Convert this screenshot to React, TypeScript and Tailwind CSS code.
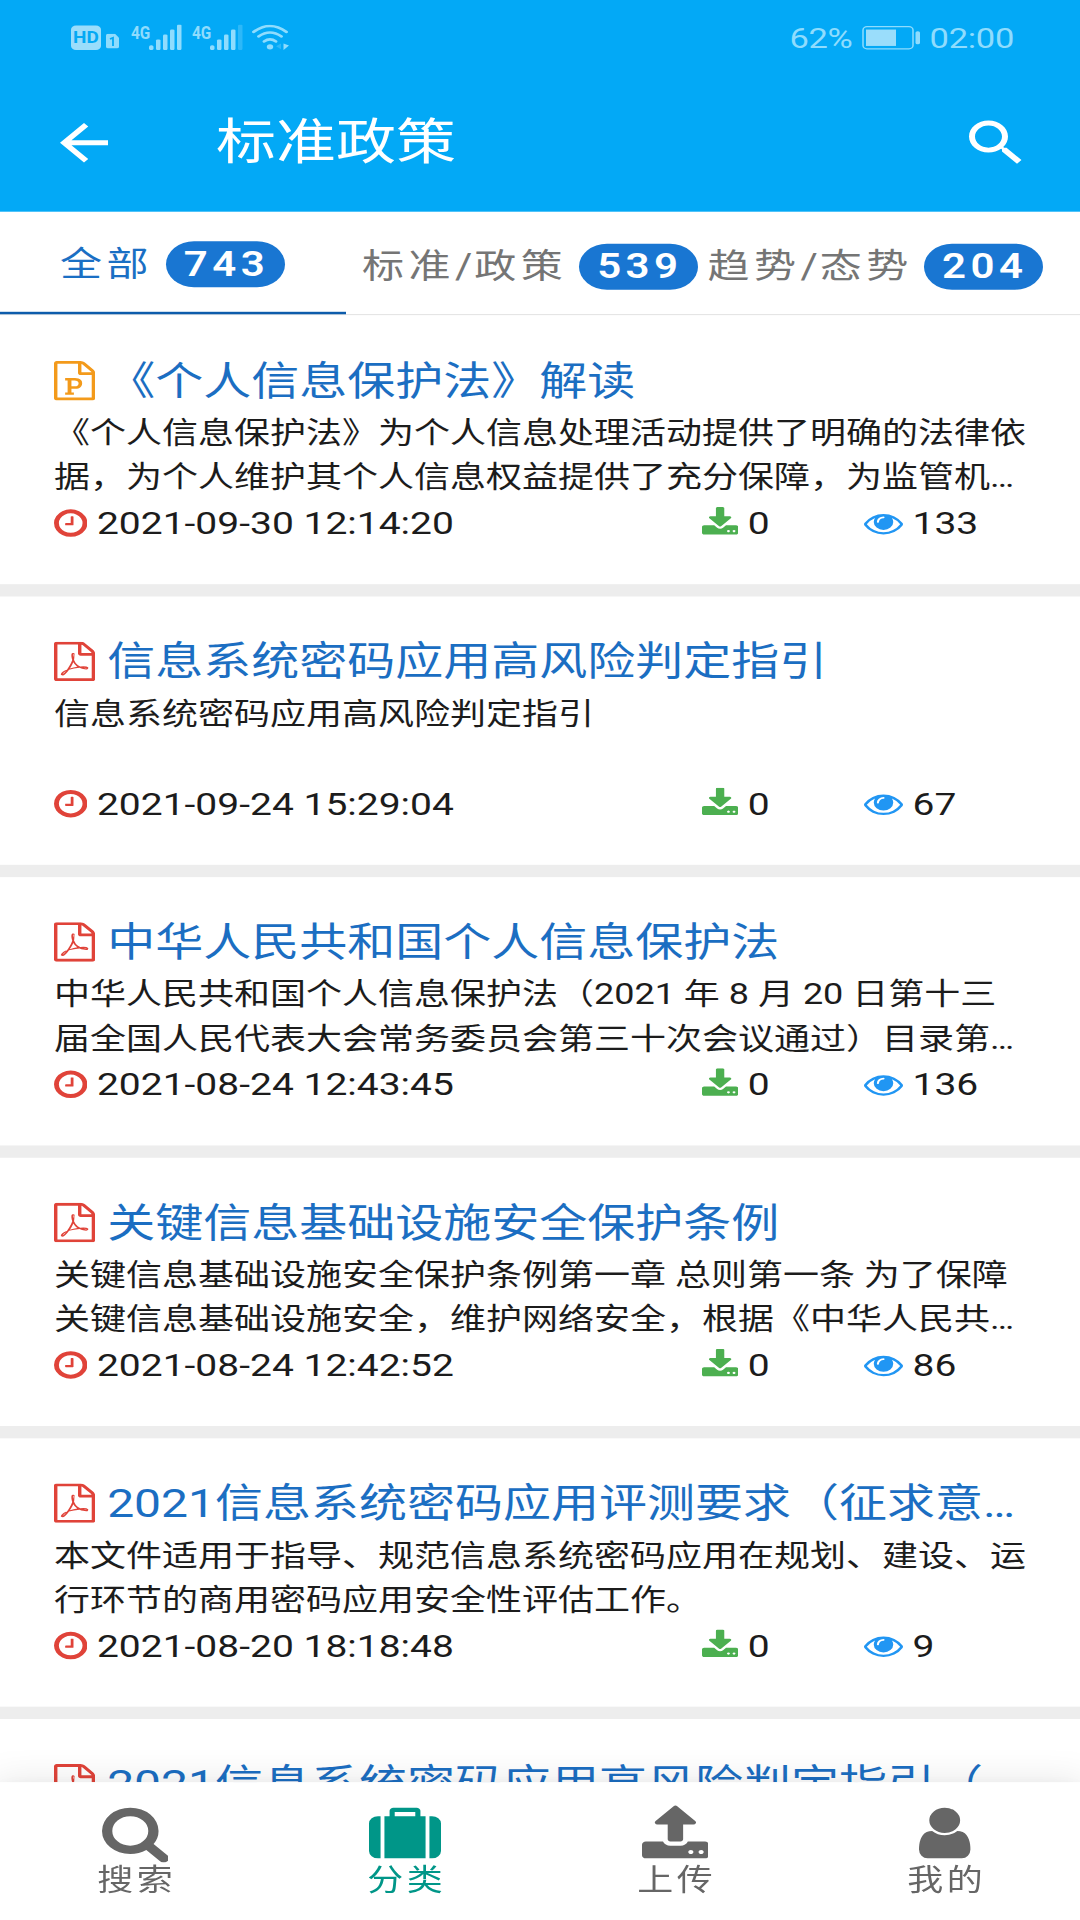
import type { ReactNode } from 'react'

type IconName =
  | 'pdf'
  | 'ppt'
  | 'clock'
  | 'download'
  | 'eye'
  | 'search'
  | 'suitcase'
  | 'upload'
  | 'user'

type Article = {
  icon: 'pdf' | 'ppt'
  title: string
  summary?: string
  date?: string
  downloads?: number
  views?: number
}

const FILE_OUTLINE =
  'M1596 380q28 28 48 76t20 88v1152q0 40-28 68t-68 28h-1344q-40 0-68-28t-28-68v-1600q0-40 28-68t68-28h896q40 0 88 20t76 48zm-444-244v376h376q-10-29-22-41l-313-313q-12-12-41-22zm384 1528v-1024h-416q-40 0-68-28t-28-68v-416h-768v1536h1280z'

// viewBox + path, on the 1792 unit grid
const icons: Record<IconName, { box: string; d: string }> = {
  pdf: {
    box: '128 0 1536 1792',
    d:
      FILE_OUTLINE +
      'm-514-593q33 26 84 56 59-7 117-7 147 0 177 49 16 22 2 52 0 1-1 2l-2 2v1q-6 38-71 38-48 0-115-20t-130-53q-221 24-392 83-153 262-242 262-15 0-28-7l-24-12q-1-1-6-5-10-10-6-36 9-40 56-91.5t132-96.5q14-9 23 6 2 2 2 4 52-85 107-197 68-136 104-262-24-82-30.5-159.5t6.5-127.5q11-40 42-40h22q23 0 35 15 18 21 9 68-2 6-4 8 1 3 1 8v30q-2 123-14 192 55 164 146 238zm-576 411q52-24 137-158-51 40-87.5 84t-49.5 74zm398-920q-15 42-2 132 1-7 7-44 0-3 7-43 1-4 4-8-1-1-1-2-1-2-1-3-1-22-13-36 0 1-1 2v2zm-124 661q135-54 284-81-2-1-13-9.5t-16-13.5q-76-67-127-176-27 86-83 197-30 56-45 83zm646-16q-24-24-140-24 76 28 124 28 14 0 18-1 0-1-2-3z',
  },
  ppt: {
    box: '128 0 1536 1792',
    d:
      FILE_OUTLINE +
      'M544 1429v107h327v-107h-92v-167h137q76 0 118-15 67-23 106.500-91t39.500-146q0-77-37-134t-100-83q-48-19-130-19h-369v107h92v548zM903 1149h-124v-263h125q54 0 86 19 57 35 57 111 0 84-56 117-34 16-88 16z',
  },
  clock: {
    box: '128 0 1536 1792',
    d: 'M1024 544v448q0 14-9 23t-23 9h-320q-14 0-23-9t-9-23v-64q0-14 9-23t23-9h224v-352q0-14 9-23t23-9h64q14 0 23 9t9 23zm416 352q0-148-73-273t-198-198-273-73-273 73-198 198-73 273 73 273 198 198 273 73 273-73 198-198 73-273zm224 0q0 209-103 385.5t-279.5 279.5-385.5 103-385.5-103-279.5-279.5-103-385.5 103-385.5 279.5-279.5 385.5-103 385.5 103 279.5 279.5 103 385.5z',
  },
  download: {
    box: '64 0 1664 1792',
    d: 'M1344 1344q0-26-19-45t-45-19-45 19-19 45 19 45 45 19 45-19 19-45zm256 0q0-26-19-45t-45-19-45 19-19 45 19 45 45 19 45-19 19-45zm128-224v320q0 40-28 68t-68 28h-1472q-40 0-68-28t-28-68v-320q0-40 28-68t68-28h465l135 136q58 56 136 56t136-56l136-136h464q40 0 68 28t28 68zm-325-569q17 41-14 70l-448 448q-18 19-45 19t-45-19l-448-448q-31-29-14-70 17-39 59-39h256v-448q0-26 19-45t45-19h256q26 0 45 19t19 45v448h256q42 0 59 39z',
  },
  eye: {
    box: '0 0 1792 1792',
    d: 'M1664 960q-152-236-381-353 61 104 61 225 0 185-131.5 316.500t-316.500 131.500-316.500-131.500-131.500-316.500q0-121 61-225-229 117-381 353 133 205 333.500 326.500t434.500 121.500 434.500-121.500 333.500-326.500zm-720-384q0-20-14-34t-34-14q-125 0-214.500 89.500t-89.500 214.500q0 20 14 34t34 14 34-14 14-34q0-86 61-147t147-61q20 0 34-14t14-34zm848 384q0 34-20 69-140 230-376.500 368.500t-499.500 138.500-499.500-139-376.500-368q-20-35-20-69t20-69q140-229 376.500-368t499.500-139 499.500 139 376.500 368q20 35 20 69z',
  },
  search: {
    box: '64 0 1664 1792',
    d: 'M1216 832q0-185-131.5-316.5t-316.5-131.5-316.5 131.5-131.5 316.5 131.5 316.5 316.5 131.5 316.5-131.5 131.5-316.5zm512 832q0 52-38 90t-90 38q-54 0-90-38l-343-342q-179 124-399 124-143 0-273.5-55.5t-225-150-150-225-55.5-273.5 55.5-273.5 150-225 225-150 273.5-55.5 273.5 55.5 225 150 150 225 55.5 273.5q0 220-124 399l343 343q37 37 37 90z',
  },
  suitcase: {
    box: '0 0 1792 1792',
    d: 'M640 384h512v-128h-512v128zm-352 0v1280h-64q-92 0-158-66t-66-158v-832q0-92 66-158t158-66h64zm1120 0v1280h-1024v-1280h128v-160q0-40 28-68t68-28h576q40 0 68 28t28 68v160h128zm384 224v832q0 92-66 158t-158 66h-64v-1280h64q92 0 158 66t66 158z',
  },
  upload: {
    box: '64 0 1664 1792',
    d: 'M1344 1472q0-26-19-45t-45-19-45 19-19 45 19 45 45 19 45-19 19-45zm256 0q0-26-19-45t-45-19-45 19-19 45 19 45 45 19 45-19 19-45zm128-224v320q0 40-28 68t-68 28h-1472q-40 0-68-28t-28-68v-320q0-40 28-68t68-28h427q21 56 70.5 92t110.5 36h256q61 0 110.5-36t70.5-92h427q40 0 68 28t28 68zm-325-648q-17 40-59 40h-256v448q0 26-19 45t-45 19h-256q-26 0-45-19t-19-45v-448h-256q-42 0-59-40-17-39 14-69l448-448q18-19 45-19t45 19l448 448q31 30 14 69z',
  },
  user: {
    box: '256 0 1280 1792',
    d: 'M1536 1399q0 109-62.5 187t-150.5 78h-854q-88 0-150.5-78t-62.5-187q0-85 8.5-160.5t31.5-152 58.5-131 94-89 134.5-34.5q131 128 313 128t313-128q76 0 134.5 34.5t94 89 58.5 131 31.5 152 8.5 160.5zm-256-887q0 159-112.5 271.5t-271.5 112.5-271.5-112.5-112.5-271.5 112.5-271.5 271.5-112.5 271.5 112.5 112.5 271.5z',
  },
}

const articles: Article[] = [
  {
    icon: 'ppt',
    title: '《个人信息保护法》解读',
    summary:
      '《个人信息保护法》为个人信息处理活动提供了明确的法律依\n据，为个人维护其个人信息权益提供了充分保障，为监管机…',
    date: '2021-09-30 12:14:20',
    downloads: 0,
    views: 133,
  },
  {
    icon: 'pdf',
    title: '信息系统密码应用高风险判定指引',
    summary: '信息系统密码应用高风险判定指引',
    date: '2021-09-24 15:29:04',
    downloads: 0,
    views: 67,
  },
  {
    icon: 'pdf',
    title: '中华人民共和国个人信息保护法',
    summary:
      '中华人民共和国个人信息保护法（2021 年 8 月 20 日第十三\n届全国人民代表大会常务委员会第三十次会议通过）目录第…',
    date: '2021-08-24 12:43:45',
    downloads: 0,
    views: 136,
  },
  {
    icon: 'pdf',
    title: '关键信息基础设施安全保护条例',
    summary:
      '关键信息基础设施安全保护条例第一章 总则第一条 为了保障\n关键信息基础设施安全，维护网络安全，根据《中华人民共…',
    date: '2021-08-24 12:42:52',
    downloads: 0,
    views: 86,
  },
  {
    icon: 'pdf',
    title: '2021信息系统密码应用评测要求（征求意…',
    summary:
      '本文件适用于指导、规范信息系统密码应用在规划、建设、运\n行环节的商用密码应用安全性评估工作。',
    date: '2021-08-20 18:18:48',
    downloads: 0,
    views: 9,
  },
  {
    icon: 'pdf',
    title: '2021信息系统密码应用高风险判定指引（…',
  },
]

const navItems: { icon: IconName; label: string; active?: boolean }[] = [
  { icon: 'search', label: '搜索' },
  { icon: 'suitcase', label: '分类', active: true },
  { icon: 'upload', label: '上传' },
  { icon: 'user', label: '我的' },
]

function Icon({ name, className }: { name: IconName; className: string }) {
  return (
    <svg viewBox={icons[name].box} fill="currentColor" className={`w-auto shrink-0 ${className}`}>
      <path d={icons[name].d} />
    </svg>
  )
}

function Signal({ weak }: { weak?: boolean }) {
  return (
    <div className="flex">
      <span className="mt-[-4px] inline-block w-[18px] origin-left scale-x-[0.7] text-[22px] leading-[28px] font-bold">
        4G
      </span>
      <svg viewBox="0 0 33 31" fill="currentColor" className="h-[31px] w-[33px]">
        <rect x="0" y="25" width="4.500" height="6" rx="2" />
        <rect x="7" y="18" width="4.500" height="13" rx="1.500" />
        <rect x="14" y="12" width="4.500" height="19" rx="1.500" />
        <rect x="21" y="6" width="4.500" height="25" rx="1.500" />
        <rect x="28" y="0" width="4.500" height="31" rx="1.500" opacity={weak ? 0.3 : 1} />
      </svg>
    </div>
  )
}

function StatusBar() {
  return (
    <div className="flex h-[90px] items-start justify-between pr-[66px] pl-[71px] text-[#8fdcfd]">
      <div className="flex pt-[30px]">
        <div className="mt-px h-[30px] w-[30px] rounded-[5px] bg-[#9addfb] text-center text-[19px] leading-[31px] font-bold text-[#03a9f4]">
          HD
        </div>
        <svg viewBox="0 0 13 18" className="mt-[11px] ml-[5px] h-[18px] w-[13px]">
          <path d="M2 0h7l4 5v11a2 2 0 0 1-2 2H2a2 2 0 0 1-2-2V2a2 2 0 0 1 2-2z" fill="currentColor" />
          <path d="M4 6.500l3-1.500v10" fill="none" stroke="#03a9f4" strokeWidth="1.800" />
        </svg>
        <div className="ml-[12px] flex gap-[10px]">
          <Signal />
          <Signal weak />
        </div>
        <svg viewBox="0 0 38 31" className="ml-[9px] h-[31px] w-[38px]" fill="none" stroke="currentColor" strokeWidth="3" strokeLinecap="round">
          <path d="M1.500 9q16.500-14.500 33 0" />
          <path d="M6.500 14.500q11.500-10 23 0" />
          <path d="M12 20.500q6-5 12 0" />
          <circle cx="18" cy="27" r="3.200" fill="currentColor" stroke="none" />
          <path d="M29 23v7l-5-3.500z" fill="currentColor" stroke="none" opacity="0.300" />
          <path d="M31.500 23v8l5.500-5.500z" fill="currentColor" stroke="none" />
        </svg>
      </div>
      <div className="flex items-center pt-[25px] text-[34.500px] leading-[42px] tracking-[-0.300px]">
        <span>62%</span>
        <svg viewBox="0 0 59 30" className="mr-[9px] ml-[9px] h-[30px] w-[59px]">
          <rect x="1" y="1.500" width="50" height="27" rx="4" fill="none" stroke="currentColor" strokeWidth="1.500" />
          <rect x="4" y="5" width="30" height="20" fill="#9addfb" />
          <rect x="53.500" y="7" width="4.500" height="16" rx="2" fill="currentColor" />
        </svg>
        <span>02:00</span>
      </div>
    </div>
  )
}

function AppBar() {
  return (
    <div className="flex h-[168px] items-center px-[48px] text-white">
      <svg viewBox="0 0 24 24" fill="currentColor" className="size-[72px]">
        <path d="M20 11H7.830l5.590-5.590L12 4l-8 8 8 8 1.410-1.410L7.830 13H20v-2z" />
      </svg>
      <h1 className="ml-[96px] flex-1 text-[60px] leading-[84px]">标准政策</h1>
      <svg viewBox="0 0 24 24" fill="currentColor" className="size-[72px]">
        <path d="M15.500 14h-.79l-.28-.27C15.410 12.590 16 11.110 16 9.500 16 5.910 13.090 3 9.500 3S3 5.910 3 9.500 5.910 16 9.500 16c1.610 0 3.090-.59 4.230-1.570l.27.28v.79l5 4.990L20.490 19l-4.990-5zm-6 0C7.010 14 5 11.990 5 9.500S7.010 5 9.500 5 14 7.010 14 9.500 11.990 14 9.500 14z" />
      </svg>
    </div>
  )
}

function Badge({ children }: { children: ReactNode }) {
  return (
    <span className="flex h-[56px] w-[119px] items-center justify-center rounded-full bg-[#1976d2] pl-[2px] font-semibold text-white">
      {children}
    </span>
  )
}

function Tabs() {
  return (
    <div className="flex h-[126px] border-b border-[#dcdcdc] text-[42px] leading-[54px] tracking-[4.500px] text-[#757575]">
      <div className="flex h-[125px] w-[346px] items-center gap-[13px] border-b-[3px] border-[#0d5cab] pt-[6px] pl-[60px] text-[#1a6fc4]">
        全部
        <Badge>743</Badge>
      </div>
      <div className="flex items-center gap-[12px] pt-[9px] pl-[16px]">
        <span>
          标准<span className="tracking-[2px]">/</span>政策
        </span>
        <Badge>539</Badge>
      </div>
      <div className="flex items-center gap-[11.500px] pt-[9px] pl-[9px]">
        <span>
          趋势<span className="tracking-[2px]">/</span>态势
        </span>
        <Badge>204</Badge>
      </div>
    </div>
  )
}

function ArticleCard({ article }: { article: Article }) {
  return (
    <article className="h-[327px] shrink-0 bg-white px-[54px] pt-[44px] text-[#1c1c1c]">
      <h2 className="flex h-[72px] items-center gap-[12px] text-[48px] leading-[72px] whitespace-nowrap text-[#1b6ec2]">
        <Icon
          name={article.icon}
          className={article.icon === 'ppt' ? 'mt-[-2px] h-[48px] text-[#f39a1b]' : 'mt-[-2px] h-[48px] text-[#e04339]'}
        />
        <span>{article.title}</span>
      </h2>
      <p className="h-[108px] text-[36px] leading-[54px] whitespace-pre">{article.summary}</p>
      {article.date && (
        <div className="grid h-[58px] grid-cols-12 items-center text-[39px] leading-[58px]">
          <div className="col-span-8 flex items-center gap-[9.500px]">
            <Icon name="clock" className="mt-[-1px] h-[39px] text-[#e04339]" />
            {article.date}
          </div>
          <div className="col-span-2 flex items-center gap-[9.500px]">
            <Icon name="download" className="mt-[-1px] h-[39px] text-[#4caf50]" />
            {article.downloads}
          </div>
          <div className="col-span-2 flex items-center gap-[9.500px]">
            <Icon name="eye" className="mt-[-1px] h-[39px] text-[#2196f3]" />
            {article.views}
          </div>
        </div>
      )}
    </article>
  )
}

function BottomNav() {
  return (
    <nav className="relative grid h-[168px] shrink-0 grid-cols-4 bg-white shadow-[0_24px_30px_3px_rgba(0,0,0,0.14),0_9px_42px_6px_rgba(0,0,0,0.12)]">
      {navItems.map((item) => (
        <div
          key={item.label}
          className={`flex flex-col items-center pt-[26px] ${item.active ? 'text-[#009688]' : 'text-[#666666]'}`}
        >
          <Icon name={item.icon} className="h-[72px]" />
          <span className="-mr-[3.600px] text-[36px] leading-[44px] tracking-[3.600px]">{item.label}</span>
        </div>
      ))}
    </nav>
  )
}

export default function App() {
  return (
    <div className="h-[1920px] w-[1080px] overflow-hidden bg-white">
      {/* 1080x2340 phone screen squeezed to 16:9 */}
      <div
        lang="zh-CN"
        className="flex h-[2340px] w-[1080px] origin-top scale-y-[0.820513] flex-col bg-white font-['Roboto','Noto_Sans_CJK_SC',sans-serif]"
      >
        <header className="shrink-0 bg-[#03a9f6]">
          <StatusBar />
          <AppBar />
        </header>
        <Tabs />
        <main className="flex min-h-0 flex-1 flex-col gap-[15px] overflow-hidden border-t border-white bg-[#ededed]">
          {articles.map((article) => (
            <ArticleCard key={article.title} article={article} />
          ))}
        </main>
        <BottomNav />
      </div>
    </div>
  )
}
